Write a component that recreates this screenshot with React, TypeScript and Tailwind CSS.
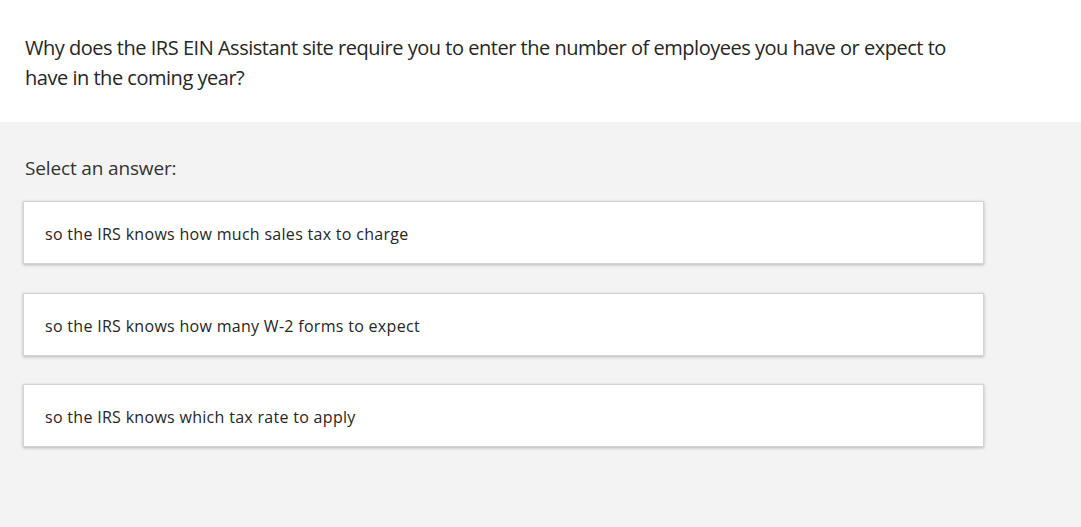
import React from "react";

const answers = [
  "so the IRS knows how much sales tax to charge",
  "so the IRS knows how many W-2 forms to expect",
  "so the IRS knows which tax rate to apply",
];

export default function App() {
  return (
    <div
      className="w-full min-h-[527px] flex flex-col text-[#262626]"
      style={{ fontFamily: '"Open Sans", "Noto Sans", sans-serif' }}
    >
      <div className="bg-white pt-[33px] pb-[29px] px-[25px]">
        <p className="w-[960px] text-[20px] leading-[30px] tracking-[-0.48px]">
          Why does the IRS EIN Assistant site require you to enter the number of employees you have or expect to have in the coming year?
        </p>
      </div>
      <div className="flex-1 bg-[#f3f3f3] px-[23px] pt-[33px] pb-[80px]">
        <div className="pl-[2px] text-[19px] leading-[26px] text-[#333] tracking-[-0.15px]">Select an answer:</div>
        <div className="mt-[20px] flex flex-col gap-[28.5px] w-[961px]">
          {answers.map((a) => (
            <div
              key={a}
              className="h-[63px] flex items-center bg-white border border-[#d4d4d4] shadow-[0_1px_3px_rgba(0,0,0,0.25)] pl-[21px] pt-[3px] text-[16px] tracking-[0.3px]"
            >
              {a}
            </div>
          ))}
        </div>
      </div>
    </div>
  );
}
